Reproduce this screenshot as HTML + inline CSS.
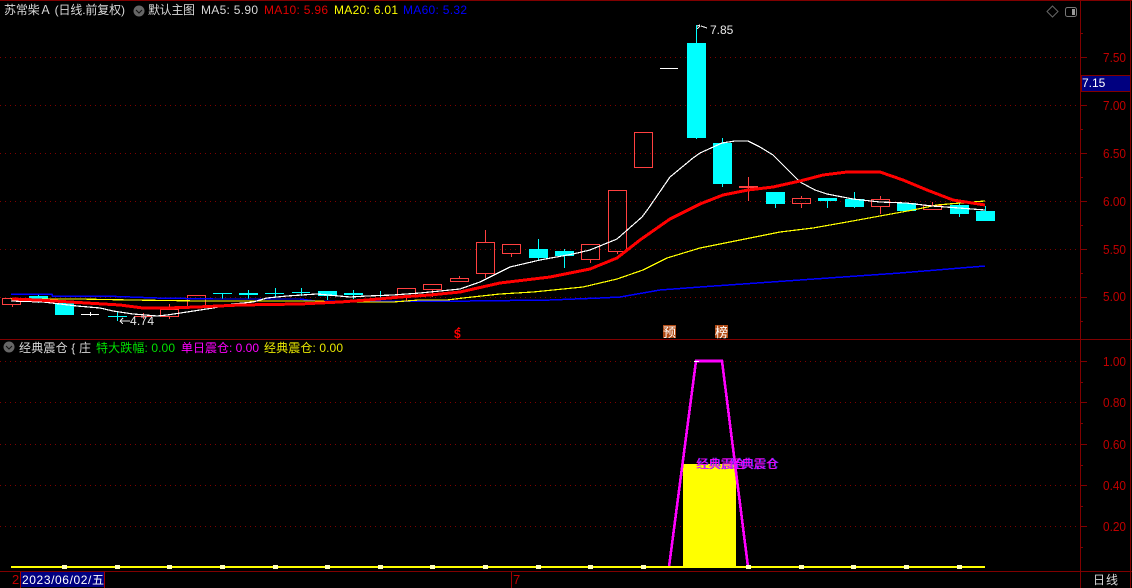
<!DOCTYPE html>
<html><head><meta charset="utf-8"><style>
html,body{margin:0;padding:0;background:#000;width:1132px;height:588px;overflow:hidden}
svg{display:block;position:absolute;left:0;top:0}
text{font-family:"Liberation Sans","Noto Sans CJK SC","WenQuanYi Zen Hei",sans-serif;font-size:12px}
.ax{fill:#c00000;font-size:13px}
.r{fill:none;stroke:#ff4040}
.c{fill:#00ffff}
.w{stroke:#00ffff;fill:none}
.rw{stroke:#ff4040;fill:none}
</style></head><body>
<svg width="1132" height="588" viewBox="0 0 1132 588" shape-rendering="crispEdges">
<rect width="1132" height="588" fill="#000"/>
<!-- grid -->
<g stroke="#800000" stroke-dasharray="1 4" fill="none">
<path d="M0 57.5H1080M0 105.5H1080M0 153.5H1080M0 201.5H1080M0 249.5H1080M0 297.5H1080M0 361.5H1080M0 402.5H1080M0 444.5H1080M0 485.5H1080M0 526.5H1080"/>
</g>
<!-- frame -->
<g stroke="#800000" fill="none">
<path d="M0 .5H1132M0 339.5H1132M0 571.5H1132"/>
<path d="M1080.5 0V588" stroke-width="1"/>
<path d="M1130.5 0V588"/>
<path d="M1081 57.5h6M1081 105.5h6M1081 153.5h6M1081 201.5h6M1081 249.5h6M1081 297.5h6M1081 361.5h6M1081 402.5h6M1081 444.5h6M1081 485.5h6M1081 526.5h6"/>
<path d="M1081 33.5h2M1081 129.5h2M1081 177.5h2M1081 225.5h2M1081 273.5h2M1081 321.5h2M1081 382.5h2M1081 423.5h2M1081 465.5h2M1081 506.5h2M1081 547.5h2"/>
</g>
<!-- candles -->
<g shape-rendering="crispEdges">
<rect class="r" x="2.5" y="298.5" width="18" height="6"/><path class="rw" d="M12.5 304v3"/>
<path class="w" d="M38.5 294v9"/><rect class="c" x="29" y="296" width="19" height="6"/>
<rect class="c" x="55" y="303" width="19" height="12"/>
<path d="M81 314.5h18M90.5 312v4" stroke="#fff" fill="none"/>
<path class="w" d="M108 316.5h19M117.5 312v9"/>
<path class="rw" d="M134 316.5h18M143.5 313v6"/>
<rect class="r" x="160.5" y="309.5" width="18" height="7"/><path class="rw" d="M169.5 304v5M169.5 317v2"/>
<rect class="r" x="187.5" y="295.5" width="18" height="12"/>
<path class="w" d="M213 293.5h19M222.5 293v6"/>
<path class="w" d="M248.5 290v9"/><rect class="c" x="239" y="293" width="19" height="2"/>
<path class="w" d="M265 293.5h19M275.5 288v9"/>
<path class="w" d="M292 292.5h18M301.5 288v8"/>
<path class="w" d="M327.5 291v9"/><rect class="c" x="318" y="291" width="19" height="5"/>
<path class="w" d="M353.5 290v9"/><rect class="c" x="344" y="293" width="19" height="2"/>
<path class="w" d="M371 295.5h18M380.5 291v8"/>
<rect class="r" x="397.5" y="288.5" width="18" height="8"/><path class="rw" d="M406.5 297v4"/>
<rect class="r" x="423.5" y="284.5" width="18" height="5"/><path class="rw" d="M432.5 290v7"/>
<rect class="r" x="450.5" y="278.5" width="18" height="3"/><path class="rw" d="M459.5 276v2"/>
<rect class="r" x="476.5" y="242.5" width="18" height="31"/><path class="rw" d="M485.5 230v12M485.5 274v4"/>
<rect class="r" x="502.5" y="244.5" width="18" height="9"/><path class="rw" d="M511.5 254v3"/>
<path class="w" d="M538.5 239v22"/><rect class="c" x="529" y="249" width="19" height="9"/>
<path class="w" d="M564.5 249v19"/><rect class="c" x="555" y="251" width="19" height="5"/>
<rect class="r" x="581.5" y="244.5" width="18" height="15"/><path class="rw" d="M590.5 260v3"/>
<rect class="r" x="608.5" y="190.5" width="18" height="61"/><path class="rw" d="M617.5 252v2"/>
<rect class="r" x="634.5" y="132.5" width="18" height="35"/>
<path d="M660 68.5h18" stroke="#fff" fill="none"/>
<path class="w" d="M696.5 25v114"/><rect class="c" x="687" y="43" width="19" height="95"/>
<path class="w" d="M722.5 138v49"/><rect class="c" x="713" y="143" width="19" height="41"/>
<rect x="739" y="186" width="19" height="2" fill="#ff4040"/><path class="rw" d="M748.5 177v24"/>
<path class="w" d="M775.5 204v4"/><rect class="c" x="766" y="192" width="19" height="12"/>
<rect class="r" x="792.5" y="198.5" width="18" height="5"/><path class="rw" d="M801.5 196v2M801.5 204v4"/>
<path class="w" d="M827.5 201v7"/><rect class="c" x="818" y="198" width="19" height="3"/>
<path class="w" d="M854.5 192v16"/><rect class="c" x="845" y="199" width="19" height="8"/>
<rect class="r" x="871.5" y="199.5" width="18" height="7"/><path class="rw" d="M880.5 196v3M880.5 207v7"/>
<rect class="c" x="897" y="203" width="19" height="8"/>
<rect class="r" x="923.5" y="205.5" width="18" height="4"/><path class="rw" d="M932.5 202v3"/>
<path class="w" d="M959.5 203v14"/><rect class="c" x="950" y="205" width="19" height="9"/>
<path class="w" d="M985.5 206v5"/><rect class="c" x="976" y="211" width="19" height="10"/>
</g>
<!-- MA lines -->
<g fill="none" stroke-linejoin="round">
<polyline stroke="#0000ff" stroke-width="1.5" points="11,294 52,294 52,296 103,296 157,298 213,299 300,299 315,301 400,301 470,301 550,300 600,298 620,297 660,290 700,287 800,280 900,273 985,266"/>
<polyline stroke="#ffff00" stroke-width="1.2" points="11,299 78,299 131,300 200,301 315,301 340,302 393,302 419,300 447,300 463,298 500,294 533,292 583,287 617,279 643,270 667,258 700,248 740,240 780,232 813,228 847,222 880,216 913,210 937,205 960,203 985,201"/>
<polyline stroke="#ffffff" stroke-width="1.2" points="11,301 43,302 60,304 77,306 100,308 113,311 133,314 157,316 167,315 187,312 213,308 233,304 253,302 267,298 287,296 317,294 350,297 367,296 393,295 420,293 450,290 460,289 480,282 510,267 540,260 573,254 590,250 617,239 642,217 648,209 670,177 693,158 700,153 722,143 735,141 748,141 760,147 773,155 800,182 815,190 827,194 853,199 880,202 906,203 932,206 959,208 985,210"/>
<polyline stroke="#ff0000" stroke-width="3" points="12,299 38,300 70,302 103,304 120,305 143,308 167,308 197,307 240,305 300,304 340,302 367,300 400,297 430,295 460,292 500,283 550,277 590,269 617,258 640,240 670,219 700,204 723,195 748,190 773,187 800,181 823,175 847,172 880,172 903,180 927,190 953,200 985,205"/>
</g>
<!-- extreme labels -->
<g fill="none" stroke="#e8e8e8">
<path d="M697 26l3-1M697 29l3 -3M701 26l6 2"/>
<path d="M120 321h10M120 321l3-3M120 321l3 3"/>
</g>
<text x="710" y="34" fill="#e8e8e8">7.85</text>
<text x="130" y="325" fill="#e8e8e8" textLength="24">4.74</text>
<!-- markers -->
<text x="454" y="338" fill="#ff0000" font-weight="bold" style="font-size:12px">$</text>
<path d="M458.5 327l-2 2h4z" fill="#ff0000"/>
<rect x="663" y="325" width="13" height="13" fill="#b04a14"/>
<text x="663" y="337" fill="#fff" style="font-size:13px">预</text>
<rect x="715" y="325" width="13" height="13" fill="#b04a14"/>
<text x="715" y="337" fill="#fff" style="font-size:13px">榜</text>
<!-- lower panel -->
<rect x="683" y="464" width="53" height="103" fill="#ffff00"/>
<polyline points="669,567 696,361 722,361 748,567" fill="none" stroke="#ff00ff" stroke-width="2.6"/>
<path d="M694 361.5h5" stroke="#fff" fill="none"/>
<text x="697" y="468" fill="#4040ff" textLength="49">经典震仓</text>
<text x="730" y="468" fill="#4040ff" textLength="49">经典震仓</text>
<text x="696" y="468" fill="#ff00ff" textLength="49">经典震仓</text>
<text x="729" y="468" fill="#ff00ff" textLength="49">经典震仓</text>
<rect x="11" y="566" width="974" height="2" fill="#ffff00"/>
<path fill="#ffffc0" d="M62 565h5v4h-5zM115 565h5v4h-5zM167 565h5v4h-5zM220 565h5v4h-5zM273 565h5v4h-5zM325 565h5v4h-5zM378 565h5v4h-5zM430 565h5v4h-5zM483 565h5v4h-5zM536 565h5v4h-5zM588 565h5v4h-5zM641 565h5v4h-5zM746 565h5v4h-5zM799 565h5v4h-5zM851 565h5v4h-5zM904 565h5v4h-5zM957 565h5v4h-5z"/>
<!-- axis labels -->
<g lengthAdjust="spacingAndGlyphs">
<text class="ax" x="1103" y="62" textLength="23" lengthAdjust="spacingAndGlyphs">7.50</text>
<text class="ax" x="1103" y="110" textLength="23" lengthAdjust="spacingAndGlyphs">7.00</text>
<text class="ax" x="1103" y="158" textLength="23" lengthAdjust="spacingAndGlyphs">6.50</text>
<text class="ax" x="1103" y="206" textLength="23" lengthAdjust="spacingAndGlyphs">6.00</text>
<text class="ax" x="1103" y="254" textLength="23" lengthAdjust="spacingAndGlyphs">5.50</text>
<text class="ax" x="1103" y="301" textLength="23" lengthAdjust="spacingAndGlyphs">5.00</text>
<text class="ax" x="1103" y="366" textLength="23" lengthAdjust="spacingAndGlyphs">1.00</text>
<text class="ax" x="1103" y="407" textLength="23" lengthAdjust="spacingAndGlyphs">0.80</text>
<text class="ax" x="1103" y="449" textLength="23" lengthAdjust="spacingAndGlyphs">0.60</text>
<text class="ax" x="1103" y="490" textLength="23" lengthAdjust="spacingAndGlyphs">0.40</text>
<text class="ax" x="1103" y="531" textLength="23" lengthAdjust="spacingAndGlyphs">0.20</text>
</g>
<rect x="1081.5" y="75.5" width="49" height="16" fill="#000080" stroke="#800000"/>
<text x="1082" y="87" fill="#fff">7.15</text>
<!-- header -->
<text x="4" y="14" fill="#d8d8d8" textLength="121">苏常柴Ａ (日线.前复权)</text>
<circle cx="139" cy="11" r="5.500" fill="#666" shape-rendering="auto"/>
<path d="M136 10l3 3 3-3" stroke="#111" fill="none" shape-rendering="auto"/>
<text x="148" y="14" fill="#d8d8d8" textLength="47">默认主图</text>
<text x="201" y="14" fill="#d8d8d8" textLength="57">MA5: 5.90</text>
<text x="264" y="14" fill="#e00000" textLength="64">MA10: 5.96</text>
<text x="334" y="14" fill="#ffff00" textLength="64">MA20: 6.01</text>
<text x="403" y="14" fill="#0000ff" textLength="64">MA60: 5.32</text>
<path d="M1052.500 6l5.500 5.500-5.500 5.500-5.500-5.500z" fill="none" stroke="#666" shape-rendering="auto"/>
<rect x="1065.500" y="7.500" width="11" height="9" rx="2" fill="none" stroke="#777" shape-rendering="auto"/>
<rect x="1072" y="9" width="3" height="6" fill="#999"/>
<!-- lower header -->
<circle cx="9" cy="347" r="5.500" fill="#666" shape-rendering="auto"/>
<path d="M6 346l3 3 3-3" stroke="#111" fill="none" shape-rendering="auto"/>
<text x="19" y="352" fill="#d8d8d8" textLength="72">经典震仓 { 庄</text>
<text x="96" y="352" fill="#00e000" textLength="79">特大跌幅: 0.00</text>
<text x="181" y="352" fill="#ff00ff" textLength="78">单日震仓: 0.00</text>
<text x="264" y="352" fill="#e8e800" textLength="79">经典震仓: 0.00</text>
<!-- bottom -->
<text x="12" y="584" fill="#c00000" style="font-size:13px">2</text>
<rect x="20.500" y="572" width="84" height="15" fill="#000080"/>
<path d="M20.500 572v16M104.500 572v16M511.500 572v16" stroke="#a00000" fill="none"/>
<text x="22" y="584" fill="#fff" textLength="82">2023/06/02/五</text>
<text x="513" y="584" fill="#c00000" style="font-size:13px">7</text>
<text x="1093" y="584" fill="#d8d8d8" textLength="25">日线</text>
</svg>
</body></html>
